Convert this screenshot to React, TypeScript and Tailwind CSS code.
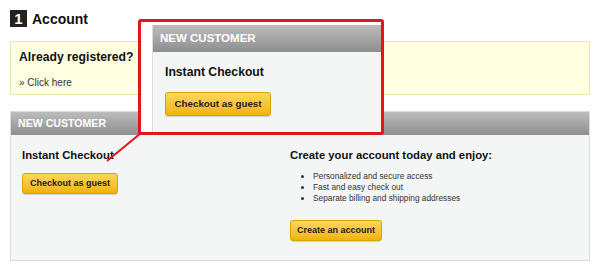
import React from 'react';

const font = { fontFamily: '"Liberation Sans", Arial, sans-serif' };

const YellowButton = ({ label, size }: { label: string; size: 'big' | 'guest' | 'create' }) => (
  <button
    className={
      'whitespace-nowrap rounded-[3px] border border-[#d9a300] bg-gradient-to-b from-[#fcd75a] to-[#f1b300] font-bold text-[#222] shadow-[0_1px_1px_rgba(0,0,0,0.15)] ' +
      (size === 'big'
        ? 'h-[24px] w-[106px] text-[9.8px]'
        : size === 'guest'
          ? 'h-[21px] w-[96px] text-[9px]'
          : 'h-[21px] w-[92px] text-[9px]')
    }
  >
    {label}
  </button>
);

const App = () => {
  const perks = [
    'Personalized and secure access',
    'Fast and easy check out',
    'Separate billing and shipping addresses',
  ];

  return (
    <div className="relative h-[272px] w-[600px] overflow-hidden bg-white px-[10px] pt-[10px]" style={font}>
      {/* Title */}
      <div className="flex h-[17px] items-center gap-[5px]">
        <span className="flex h-[17px] w-[17px] items-center justify-center bg-[#222] text-[15px] font-bold leading-none text-white">
          1
        </span>
        <span className="text-[14px] font-bold leading-none text-[#111]">Account</span>
      </div>

      {/* Already registered */}
      <div className="mt-[14px] h-[54px] border border-[#e9e4ad] bg-[#ffffe1] px-[8px] pt-[7px]">
        <h3 className="text-[12.2px] font-bold leading-[16px] text-[#111]">Already registered?</h3>
        <p className="mt-[11px] text-[10px] leading-[13px] text-[#333]">» Click here</p>
      </div>

      {/* New customer panel */}
      <div className="mt-[16px] h-[150px] border border-[#dcdcdc] bg-[#f4f5f5]">
        <div className="flex h-[23px] items-center bg-gradient-to-b from-[#bdbdbd] to-[#8e8e8e] px-[7px] text-[10.6px] font-bold text-white">
          NEW CUSTOMER
        </div>
        <div className="grid grid-cols-[268px_1fr] px-[11px] pt-[12px]">
          <div>
            <h4 className="text-[11.3px] font-bold leading-[16px] text-[#111]">Instant Checkout</h4>
            <div className="mt-[10px] flex">
              <YellowButton label="Checkout as guest" size="guest" />
            </div>
          </div>
          <div>
            <h4 className="text-[11.3px] font-bold leading-[16px] text-[#111]">Create your account today and enjoy:</h4>
            <ul className="mt-[8px] list-disc pl-[23px] text-[8.3px] leading-[11px] text-[#333]">
              {perks.map((p) => (
                <li key={p}>{p}</li>
              ))}
            </ul>
            <div className="mt-[16px] flex">
              <YellowButton label="Create an account" size="create" />
            </div>
          </div>
        </div>
      </div>

      {/* Zoomed callout */}
      <svg className="absolute left-0 top-0" width="600" height="272">
        <line x1="141" y1="133" x2="107" y2="161" stroke="#e3141b" strokeWidth="2" />
      </svg>
      <div className="absolute left-[138px] top-[19px] h-[116px] w-[246px] overflow-hidden rounded-[3px] border-[3px] border-[#e3141b] bg-white">
        <div className="ml-[11px] mt-[3px] h-[120px] border-l border-[#dcdcdc] bg-[#f4f5f5]">
          <div className="flex h-[27px] items-center bg-gradient-to-b from-[#bdbdbd] to-[#8e8e8e] px-[7px] text-[11.5px] font-bold text-white">
            NEW CUSTOMER
          </div>
          <div className="px-[12px] pt-[12px]">
            <h4 className="text-[12.2px] font-bold leading-[17px] text-[#111]">Instant Checkout</h4>
            <div className="mt-[11px] flex">
              <YellowButton label="Checkout as guest" size="big" />
            </div>
          </div>
        </div>
      </div>
    </div>
  );
};

export default App;
